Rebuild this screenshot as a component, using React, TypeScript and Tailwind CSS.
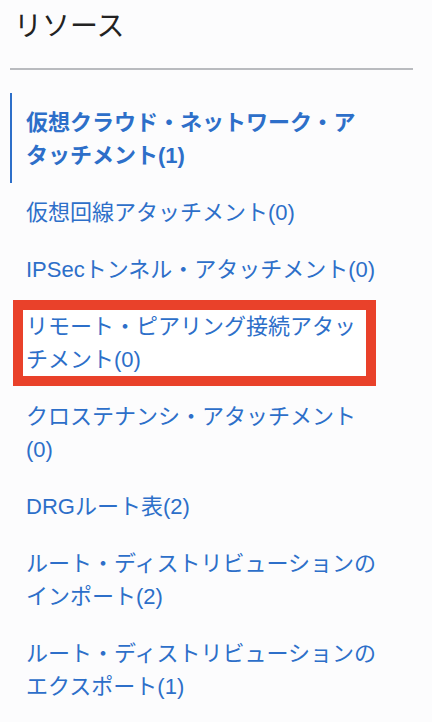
import React from "react";

interface Resource {
  lines: string[];
  active?: boolean;
  marked?: boolean;
}

const resources: Resource[] = [
  { lines: ["仮想クラウド・ネットワーク・ア", "タッチメント(1)"], active: true },
  { lines: ["仮想回線アタッチメント(0)"] },
  { lines: ["IPSecトンネル・アタッチメント(0)"] },
  { lines: ["リモート・ピアリング接続アタッ", "チメント(0)"], marked: true },
  { lines: ["クロステナンシ・アタッチメント", "(0)"] },
  { lines: ["DRGルート表(2)"] },
  { lines: ["ルート・ディストリビューションの", "インポート(2)"] },
  { lines: ["ルート・ディストリビューションの", "エクスポート(1)"] },
];

function Lines({ lines }: { lines: string[] }) {
  return (
    <>
      {lines.map((l, i) => (
        <span key={i} className="block whitespace-nowrap">
          {l}
        </span>
      ))}
    </>
  );
}

export default function App() {
  return (
    <div
      className="min-h-screen w-[432px] bg-[#fcfcfd] pl-[10px] pr-[19px]"
      style={{ fontFamily: '"Liberation Sans", "Noto Sans CJK JP", sans-serif' }}
    >
      <h2 className="pl-[4px] pt-[9px] pb-[23px] text-[28px] leading-[36px] text-[#222222] font-normal">
        リソース
      </h2>
      <div className="h-[2px] bg-[#b9bbbf]" />
      <ul className="mt-[23px]">
        {resources.map((r, i) => (
          <li
            key={i}
            className={
              r.active
                ? "border-l-2 border-[#2d6fc9] pt-[13px] pb-[11px] pl-[14px] text-[22px] leading-[33px] font-bold text-[#2d6fc9]"
                : "border-l-2 border-transparent pt-[13px] pb-[11px] pl-[14px] text-[22px] leading-[33px] text-[#2d6fc9]"
            }
          >
            {r.marked ? (
              <div className="-my-[10px] -ml-[13px] w-[363px] border-[10px] border-[#e9412a] bg-white pl-[3px]">
                <Lines lines={r.lines} />
              </div>
            ) : (
              <Lines lines={r.lines} />
            )}
          </li>
        ))}
      </ul>
    </div>
  );
}
